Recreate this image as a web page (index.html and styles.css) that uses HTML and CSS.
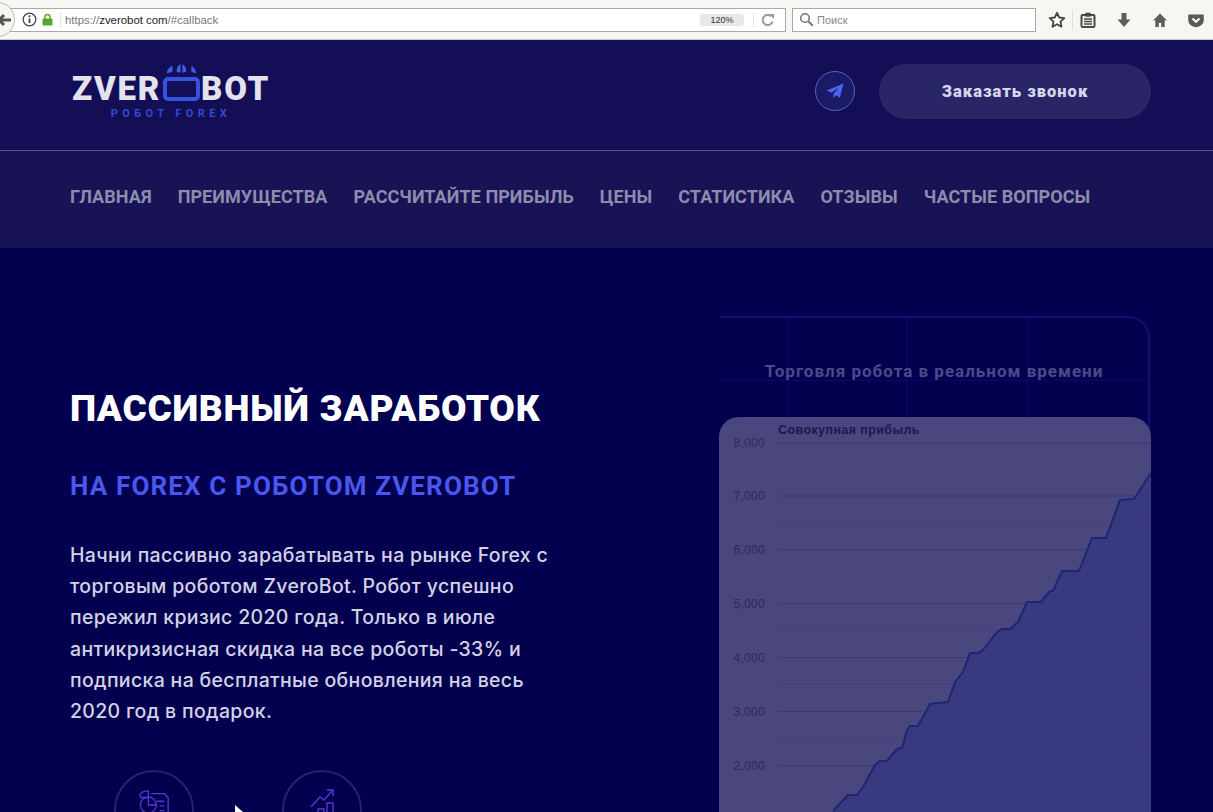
FILE: index.html
```html
<!DOCTYPE html>
<html lang="ru">
<head>
<meta charset="utf-8">
<title>ZveroBot</title>
<link rel="stylesheet" href="styles.css">
</head>
<body>
<div class="browser">
  <div class="back"><svg width="14" height="14" viewBox="0 0 14 14"><path d="M1 7h12M1 7l5-5M1 7l5 5" fill="none" stroke="#555" stroke-width="3"/></svg></div>
  <div class="urlbar">
    <svg class="info" width="15" height="15" viewBox="0 0 15 15"><circle cx="7.5" cy="7.5" r="6.3" fill="#fff" stroke="#444" stroke-width="1.3"/><path d="M7.5 6.5v4.5" stroke="#444" stroke-width="1.8"/><circle cx="7.5" cy="4.3" r="1.1" fill="#444"/></svg>
    <svg class="lock" width="11" height="13" viewBox="0 0 11 13"><path d="M3 6V4a2.5 2.5 0 0 1 5 0v2" fill="none" stroke="#5aa82a" stroke-width="1.5"/><rect x="0.5" y="5.5" width="10" height="7" rx="1" fill="#5aa82a"/></svg>
    <span class="sep"></span>
    <span class="url">https://<b>zverobot com</b>/#callback</span>
    <span class="zoomlevel">120%</span>
    <span class="sep sep-r"></span>
    <svg class="reload" width="14" height="14" viewBox="0 0 14 14"><path d="M11.5 8.5A5 5 0 1 1 10 3.3" fill="none" stroke="#999" stroke-width="2"/><path d="M8 1h5v5z" fill="#999"/></svg>
  </div>
  <div class="searchbar">
    <svg width="15" height="15" viewBox="0 0 15 15"><circle cx="6" cy="6" r="4.3" fill="none" stroke="#777" stroke-width="1.6"/><path d="M9.2 9.2l4.6 4.6" stroke="#777" stroke-width="2"/></svg>
    <span>Поиск</span>
  </div>
  <div class="tools">
    <svg width="18" height="18" viewBox="0 0 18 18"><path d="M9 1.8l2.2 4.7 5.1.6-3.8 3.5 1 5.1L9 13.2l-4.5 2.5 1-5.1L1.700 7.100l5.100-.6z" fill="#fff" stroke="#444" stroke-width="1.800" stroke-linejoin="round"/></svg>
    <span class="tool-sep"></span>
    <svg width="16" height="16" viewBox="0 0 16 16"><rect x="1.500" y="3" width="13" height="12" rx="1" fill="none" stroke="#4a4a44" stroke-width="2"/><path d="M6 1.500h4V4H6zM4 7h8M4 9.500h8M4 12h8" stroke="#4a4a44" stroke-width="1.500" fill="#4a4a44"/></svg>
    <svg width="16" height="16" viewBox="0 0 16 16"><path d="M5.500 1h5v6.500h4L8 15 1.500 7.500h4z" fill="#5e5e56"/></svg>
    <svg width="16" height="16" viewBox="0 0 16 16"><path d="M8 1.500L1 8.500h2.300V15h3.500v-4h2.400v4h3.500V8.500H15z" fill="#5e5e56"/></svg>
    <svg width="16" height="16" viewBox="0 0 16 16"><path d="M1 2.500h14a.8.8 0 0 1 .8.8V8A7.800 7.200 0 0 1 .2 8V3.300a.8.8 0 0 1 .8-.8z" fill="#5a5a52"/><path d="M4.500 6.500L8 9.800l3.500-3.300" fill="none" stroke="#fff" stroke-width="2"/></svg>
  </div>
</div>

<header class="header">
  <div class="logo">
    <div class="logo-main">
      <span>ZVER</span>
      <span class="logo-box">
        <svg class="drops" width="34" height="10" viewBox="0 0 36 12" preserveAspectRatio="none"><path d="M9 2C5 4 3 7.500 3 11L9 9.500zM17.500 0C14.500 2 13 5.500 13.500 9.500L17.500 10.500zM19.500 0C22.500 2 24 5.500 23.500 9.500L19.500 10.500zM29 2C32 4 34 7.500 34 11L29 9.500z" fill="#3f5be8"/></svg>
      </span>
      <span>BOT</span>
    </div>
    <div class="logo-sub">РОБОТ FOREX</div>
  </div>
  <div class="header-actions">
    <a class="telegram"><svg width="18" height="16" viewBox="0 0 18 16"><path d="M17.500.5L.5 7.500l5 2.300L13 4.500 7.500 11l-.3 4 2.800-2.800 3.800 2.300z" fill="#4a63f0"/></svg></a>
    <a class="callback">Заказать звонок</a>
  </div>
</header>

<nav class="nav">
  <a>ГЛАВНАЯ</a>
  <a>ПРЕИМУЩЕСТВА</a>
  <a>РАССЧИТАЙТЕ ПРИБЫЛЬ</a>
  <a>ЦЕНЫ</a>
  <a>СТАТИСТИКА</a>
  <a>ОТЗЫВЫ</a>
  <a>ЧАСТЫЕ ВОПРОСЫ</a>
</nav>

<main class="hero">
  <section class="intro">
    <h1>ПАССИВНЫЙ ЗАРАБОТОК</h1>
    <h2>НА FOREX С РОБОТОМ ZVEROBOT</h2>
    <p>Начни пассивно зарабатывать на рынке Forex с<br>торговым роботом ZveroBot. Робот успешно<br>пережил кризис 2020 года. Только в июле<br>антикризисная скидка на все роботы -33% и<br>подписка на бесплатные обновления на весь<br>2020 год в подарок.</p>
    <div class="badges">
      <div class="badge"><svg width="32" height="32" viewBox="0 0 34 34"><g fill="none" stroke="#5a35d6" stroke-width="1.400"><path d="M14 5h14l4 4v25H14"/><path d="M20 13h8M23 18h5M23 23h5M23 28h5"/><circle cx="11" cy="17" r="8.500"/><path d="M11 8.500V17h8.500"/><path d="M2 6c2-3 6-4 9-4v7H3z"/></g></svg></div>
      <div class="badge"><svg width="24" height="32" viewBox="0 0 24 32"><g fill="none" stroke="#5a35d6" stroke-width="1.400"><path d="M1 18L10 8l4 3 8-9"/><path d="M17 1h6v6"/><path d="M17 14h6v18h-6zM8 20h6v12H8zM1 25h5v7H1z"/></g></svg></div>
    </div>
  </section>
  <section class="trade">
    <svg class="trade-grid" viewBox="0 0 430 100" preserveAspectRatio="none"><path d="M68 0v100M187 0v100M308 0v100M0 63h430" stroke="#0a0b66" stroke-width="1" fill="none"/></svg>
    <h3>Торговля робота в реальном времени</h3>
    <div class="chart">
      <svg viewBox="719 417 432 395" width="432" height="395">
        <g class="minor"><path d="M778 469.500H1151M778 523H1151M778 576H1151M778 630H1151M778 684H1151M778 738H1151M778 792H1151"/></g>
        <g class="major"><path d="M778 443H1151M778 496H1151M778 549.500H1151M778 603.500H1151M778 657.500H1151M778 711.500H1151M778 765.500H1151"/></g>
        <path class="area" d="M833 811L848 795H857L863 787L875 765L880 761H887L897 749L902 748L907 730L910 726H918L930 704L948 702L955 682L963 672L970 653H978L983 650L997 632L1002 629H1010L1018 622L1027 602H1041L1050 591H1053L1062 571H1079L1092 538H1106L1120 500L1134 499L1151 473V812H833Z"/>
        <path class="line" d="M833 811L848 795H857L863 787L875 765L880 761H887L897 749L902 748L907 730L910 726H918L930 704L948 702L955 682L963 672L970 653H978L983 650L997 632L1002 629H1010L1018 622L1027 602H1041L1050 591H1053L1062 571H1079L1092 538H1106L1120 500L1134 499L1151 473"/>
        <text class="chart-title" x="778" y="434">Совокупная прибыль</text>
        <g class="axis">
          <text x="765" y="447">8,000</text>
          <text x="765" y="500">7,000</text>
          <text x="765" y="553.500">6,000</text>
          <text x="765" y="607.500">5,000</text>
          <text x="765" y="661.500">4,000</text>
          <text x="765" y="715.500">3,000</text>
          <text x="765" y="769.500">2,000</text>
        </g>
      </svg>
    </div>
  </section>
</main>
<svg class="cursor" width="12" height="7" viewBox="0 0 12 7"><path d="M0 0l8 7H0z" fill="#fff"/></svg>
</body>
</html>
```

FILE: styles.css
```css
* { box-sizing: border-box; }
html, body { margin: 0; height: 812px; overflow: hidden; }
body { background: #03004f; font-family: "Roboto", "Liberation Sans", sans-serif; position: relative; }
a { display: block; }

/* browser chrome */
.browser { height: 40px; background: #f6f6f3; border-bottom: 1px solid #c9c9d0; display: flex; align-items: center; padding-right: 9px; }
.back { position: absolute; left: -20px; top: 2px; width: 35px; height: 35px; border-radius: 50%; background: #f6f6f3; border: 1px solid #b9b9b9; display: flex; align-items: center; justify-content: flex-end; padding-right: 2px; z-index: 1; }
.urlbar { margin-left: 10px; width: 776px; height: 24px; border: 1px solid #a9a9a9; background: #fff; display: flex; align-items: center; padding-left: 11px; font-family: "Liberation Sans", sans-serif; color: #777; }
.lock { margin-left: 5px; }
.sep { width: 1px; height: 16px; background: #e2e2e2; margin: 0 4px 0 7px; }
.url { flex: 1; font-size: 11.400px; }
.url b { font-weight: 400; color: #222; }
.zoomlevel { width: 44px; height: 12px; line-height: 12px; border-radius: 3px; background: #e8e8e8; color: #333; font-size: 9px; text-align: center; }
.sep-r { margin: 0 0 0 9px; }
.reload { margin: 0 10px 0 7px; }
.searchbar { margin-left: 6px; width: 244px; height: 24px; border: 1px solid #a9a9a9; background: #fff; display: flex; align-items: center; gap: 3px; padding-left: 6px; font-size: 11px; font-family: "Liberation Sans", sans-serif; color: #888; }
.tools { flex: 1; display: flex; align-items: center; gap: 20px; padding-left: 12px; }
.tool-sep { width: 1px; height: 20px; background: #e0e0e0; margin: 0 -13px 0 -14px; }

/* header */
.header { height: 111px; background: #130e55; border-bottom: 1px solid #55527f; display: flex; justify-content: space-between; padding: 0 62px 0 72px; }
.logo { width: 198px; padding-top: 36px; }
.logo-main { display: flex; align-items: center; justify-content: space-between; font-family: "Roboto", sans-serif; font-weight: 900; font-size: 33px; line-height: 26px; color: #e3e3ee; letter-spacing: 1.800px; }
.logo-box { position: relative; width: 37px; height: 24px; border: 4px solid #3652e0; border-radius: 5px; background: #130e55; }
.drops { position: absolute; left: -3px; top: -17px; }
.logo-sub { margin-top: 5px; text-align: center; font-family: "Roboto", sans-serif; font-weight: 700; font-size: 11px; line-height: 14px; letter-spacing: 4.400px; color: #2f4bd0; }
.header-actions { display: flex; align-items: center; gap: 24px; padding-bottom: 8px; }
.telegram { width: 40px; height: 40px; border-radius: 50%; border: 1px solid #5a62b8; background: #1a1a66; display: flex; align-items: center; justify-content: center; }
.callback { width: 272px; height: 55px; border-radius: 28px; background: #2a2566; color: #d6d6ee; font-weight: 900; font-size: 16.500px; line-height: 55px; text-align: center; letter-spacing: 1px; }

/* nav */
.nav { height: 97px; background: #171354; display: flex; gap: 26px; padding: 35px 0 0 70px; font-weight: 700; font-size: 18px; line-height: 22px; color: #8d8cae; letter-spacing: .07px; }

/* hero */
.hero { display: flex; justify-content: space-between; height: 564px; overflow: hidden; padding: 68px 63px 0 70px; }
.intro { width: 500px; padding-top: 71px; }
h1 { margin: 0; font-size: 37px; line-height: 44px; font-weight: 900; color: #fff; letter-spacing: .75px; white-space: nowrap; }
h2 { margin: 40px 0 0; font-size: 26px; line-height: 30px; font-weight: 700; color: #4a57ee; letter-spacing: 1.150px; white-space: nowrap; }
.intro p { margin: 39px 0 0; font-family: "Inter", sans-serif; font-weight: 500; font-size: 19.500px; line-height: 31.200px; color: #d3d3e6; letter-spacing: .33px; white-space: nowrap; }
.badges { display: flex; gap: 88px; margin: 43px 0 0 44px; }
.badge { width: 80px; height: 80px; border-radius: 50%; border: 2px solid #1f2670; display: flex; justify-content: center; padding-top: 17px; flex: none; }
.badge svg { flex: none; }

.trade { position: relative; width: 430px; height: 496px; border-top: 2px solid #0e1272; border-right: 2px solid #0e1272; border-top-right-radius: 22px; }
.trade-grid { position: absolute; left: 0; top: 0; width: 430px; height: 99px; }
h3 { position: relative; margin: 0; padding-top: 41px; height: 99px; text-align: center; font-size: 17px; line-height: 24px; font-weight: 700; color: #4c4a8a; letter-spacing: 1px; }
.chart { position: relative; width: 432px; height: 395px; margin-left: -1px; background: #4a477f; border-radius: 20px 20px 0 0; overflow: hidden; }
.chart svg { display: block; }
.minor path { stroke: #474579; stroke-width: 1; fill: none; }
.major path { stroke: #3c3a72; stroke-width: 1; fill: none; }
.area { fill: #38387f; fill-opacity: .96; }
.line { fill: none; stroke: #1c2674; stroke-width: 2; stroke-linejoin: round; }
.chart-title { font-family: "Liberation Sans", sans-serif; font-size: 12.500px; font-weight: 700; fill: #1a1850; letter-spacing: .4px; }
.axis text { font-family: "Liberation Sans", sans-serif; font-size: 12px; fill: #2b2a62; text-anchor: end; letter-spacing: .3px; }

.cursor { position: absolute; left: 235px; top: 805px; }
```
